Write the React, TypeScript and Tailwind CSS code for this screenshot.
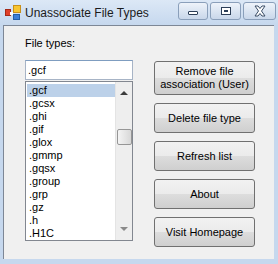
import React from "react";

const items = [
  ".gcf",
  ".gcsx",
  ".ghi",
  ".gif",
  ".glox",
  ".gmmp",
  ".gqsx",
  ".group",
  ".grp",
  ".gz",
  ".h",
  ".H1C",
];

const buttons = [
  { label: "Remove file\nassociation (User)", h: "h-[34px]" },
  { label: "Delete file type", h: "h-[30px]" },
  { label: "Refresh list", h: "h-[30px]" },
  { label: "About", h: "h-[30px]" },
  { label: "Visit Homepage", h: "h-[30px]" },
];

const AppIcon = () => (
  <svg width="16" height="16" viewBox="0 0 16 16">
    <rect x="8.5" y="0.5" width="7" height="7" fill="#f7c531" stroke="#c8901a" />
    <rect x="0.5" y="4.5" width="5" height="6" fill="#e0402a" stroke="#a52a18" />
    <rect x="8.5" y="9.5" width="6" height="5" fill="#3d7fd6" stroke="#235ea8" />
    <rect x="5" y="7" width="3" height="3" fill="#ffffff" />
  </svg>
);

const CaptionButton = ({ w, children }: { w: string; children: React.ReactNode }) => (
  <div
    className={`${w} h-[18px] rounded-[3px] border border-[#8a9fba] bg-gradient-to-b from-[#eef3fa] via-[#dbe5f2] to-[#c9d7ea] flex items-center justify-center`}
  >
    {children}
  </div>
);

export default function App() {
  return (
    <div className="w-[278px] h-[264px] bg-[#c6d8ee] flex flex-col overflow-hidden font-['Liberation_Sans',Arial,sans-serif]">
      {/* Title bar */}
      <div className="h-[25px] flex items-center pl-[5px] pr-[2px] bg-gradient-to-b from-[#dce8f6] to-[#c6d8ee]">
        <AppIcon />
        <span className="ml-[4px] text-[12px] text-[#1b1b1b]">Unassociate File Types</span>
        <div className="ml-auto flex gap-[2px] mt-[-3px]">
          <CaptionButton w="w-[30px]">
            <div className="w-[10px] h-[4px] border border-[#2c3e57] bg-white rounded-[1px] mt-[4px]" />
          </CaptionButton>
          <CaptionButton w="w-[31px]">
            <div className="w-[10px] h-[8px] border border-[#2c3e57] bg-white flex items-center justify-center">
              <div className="w-[4px] h-[2px] border border-[#2c3e57]" />
            </div>
          </CaptionButton>
          <CaptionButton w="w-[33px]">
            <svg width="14" height="12" viewBox="0 0 14 12">
              <path
                d="M2 1 L5 1 L7 3.5 L9 1 L12 1 L8.5 6 L12 11 L9 11 L7 8.5 L5 11 L2 11 L5.5 6 Z"
                fill="#ffffff"
                stroke="#3a4d66"
                strokeWidth="1"
              />
            </svg>
          </CaptionButton>
        </div>
      </div>

      {/* Client area */}
      <div className="ml-[3px] mr-[4px] h-[234px] bg-[#f0f0f0] border-l border-t border-[#7d8796] flex pl-[21px] pt-[11px] text-[11px] text-black">
        <div className="w-[108px] flex flex-col">
          <div className="h-[13px] leading-[13px] mb-[10px]">File types:</div>
          <div className="h-[20px] border border-[#a7b4c6] border-t-[#7f9dc0] bg-white flex items-center px-[2px]">
            .gcf
          </div>
          <div className="h-[160px] mt-[1px] border border-[#828790] bg-white flex">
            <div className="flex-1 pt-[2px] pl-[1px]">
              {items.map((it, i) => (
                <div
                  key={it}
                  className={`h-[13px] leading-[13px] pl-[2px] ${i === 0 ? "bg-[#bcd1e9]" : ""}`}
                >
                  {it}
                </div>
              ))}
            </div>
            <div className="w-[17px] bg-[#eeeeee] border-l border-[#e4e4e4] flex flex-col items-center">
              <div className="h-[17px] flex items-center justify-center mt-[2px]">
                <div className="w-0 h-0 border-l-[4px] border-r-[4px] border-b-[4px] border-l-transparent border-r-transparent border-b-[#3c3c3c]" />
              </div>
              <div className="mt-[28px] w-[15px] h-[16px] rounded-[2px] border border-[#969696] bg-gradient-to-r from-[#f4f4f4] to-[#d8d8d8]" />
              <div className="mt-auto mb-[3px] h-[17px] flex items-center justify-center">
                <div className="w-0 h-0 border-l-[4px] border-r-[4px] border-t-[4px] border-l-transparent border-r-transparent border-t-[#8a8a8a]" />
              </div>
            </div>
          </div>
        </div>

        <div className="ml-[21px] mt-[24px] w-[101px] flex flex-col gap-[8px]">
          {buttons.map((b) => (
            <div
              key={b.label}
              className={`${b.h} rounded-[3px] border border-[#707070] bg-[linear-gradient(#f2f2f2_0%,#ebebeb_50%,#dddddd_50%,#cfcfcf_100%)] flex items-center justify-center text-center whitespace-pre-line leading-[13px]`}
            >
              {b.label}
            </div>
          ))}
        </div>
      </div>
    </div>
  );
}
